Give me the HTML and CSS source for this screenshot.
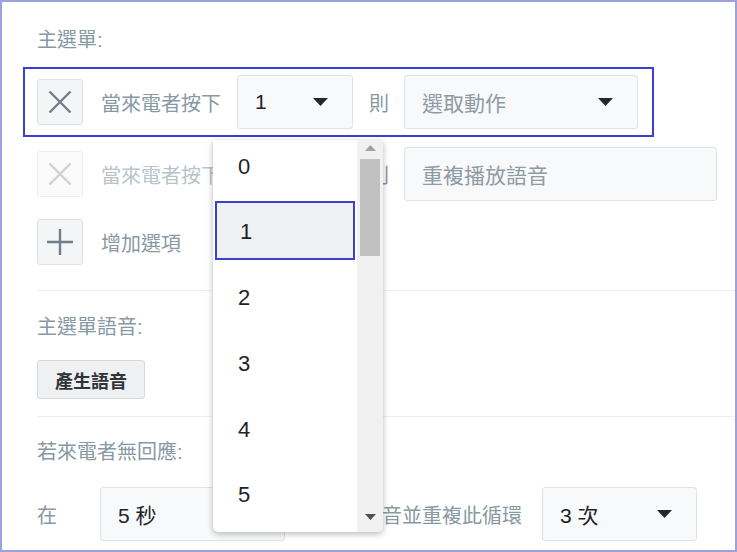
FILE: index.html
```html
<!DOCTYPE html>
<html lang="zh-Hant">
<head>
<meta charset="utf-8">
<link rel="stylesheet" href="styles.css">
</head>
<body>
<div class="frame">
  <section class="section first">
    <div class="label">主選單:</div>
    <div class="focus-wrap">
      <div class="row">
        <div class="icon-btn">
          <svg width="24" height="24" viewBox="0 0 24 24"><path d="M1.5 1.5 L22.5 22.5 M22.5 1.5 L1.5 22.5" stroke="#6f7e88" stroke-width="2.4" fill="none"/></svg>
        </div>
        <div class="cond">當來電者按下</div>
        <div class="select key"><span class="val">1</span><svg class="caret" width="15" height="8" viewBox="0 0 15 8"><path d="M0 0 H15 L7.5 8 Z" fill="#23272a"/></svg></div>
        <div class="then">則</div>
        <div class="select action"><span class="ph">選取動作</span><svg class="caret" width="15" height="8" viewBox="0 0 15 8"><path d="M0 0 H15 L7.5 8 Z" fill="#23272a"/></svg></div>
      </div>
    </div>
    <div class="row row2">
      <div class="icon-btn disabled">
        <svg width="24" height="24" viewBox="0 0 24 24"><path d="M1.5 1.5 L22.5 22.5 M22.5 1.5 L1.5 22.5" stroke="#ccd3d8" stroke-width="2.4" fill="none"/></svg>
      </div>
      <div class="cond dim">當來電者按下</div>
      <div class="select key"><span class="val">0</span></div>
      <div class="then dim">則</div>
      <div class="input"><span class="ph">重複播放語音</span></div>
    </div>
    <div class="row row3">
      <div class="icon-btn">
        <svg width="28" height="28" viewBox="0 0 28 28"><path d="M14 1 V27 M1 14 H27" stroke="#6f7e88" stroke-width="2.4" fill="none"/></svg>
      </div>
      <div class="cond">增加選項</div>
    </div>
  </section>
  <section class="section second">
    <div class="label">主選單語音:</div>
    <div class="btn">產生語音</div>
  </section>
  <section class="section third">
    <div class="label">若來電者無回應:</div>
    <div class="row">
      <div class="at">在</div>
      <div class="select secs"><span class="val">5 秒</span><svg class="caret" width="15" height="8" viewBox="0 0 15 8"><path d="M0 0 H15 L7.5 8 Z" fill="#23272a"/></svg></div>
      <div class="tail">後播放語音並重複此循環</div>
      <div class="select times"><span class="val">3 次</span><svg class="caret" width="15" height="8" viewBox="0 0 15 8"><path d="M0 0 H15 L7.5 8 Z" fill="#23272a"/></svg></div>
    </div>
  </section>
</div>

<div class="dropdown">
  <div class="list">
    <div class="opt">0</div>
    <div class="opt selected">1</div>
    <div class="opt">2</div>
    <div class="opt">3</div>
    <div class="opt">4</div>
    <div class="opt">5</div>
  </div>
  <div class="scrollbar">
    <svg class="arrow" width="11" height="6" viewBox="0 0 11 6"><path d="M0 6 H11 L5.5 0 Z" fill="#a3a3a3"/></svg>
    <div class="thumb"></div>
    <div class="spacer"></div>
    <svg class="arrow" width="11" height="6" viewBox="0 0 11 6"><path d="M0 0 H11 L5.5 6 Z" fill="#505050"/></svg>
  </div>
</div>
</body>
</html>
```
FILE: styles.css
```css
* { box-sizing: border-box; }

html, body {
  margin: 0;
  padding: 0;
  background: #ffffff;
}

body {
  font-family: "Liberation Sans", "Noto Sans CJK TC", sans-serif;
  width: 737px;
  height: 552px;
  overflow: hidden;
}

.frame {
  width: 737px;
  height: 552px;
  border: 2px solid #9ca2dd;
  padding-left: 35px;
  background: #fff;
  overflow: hidden;
}

.section {
  padding-right: 18px;
}

.first {
  padding-top: 24px;
  padding-bottom: 21px;
}

.second {
  border-top: 1px solid #eceef0;
  padding-top: 22px;
  padding-bottom: 17px;
}

.third {
  border-top: 1px solid #eceef0;
  padding-top: 21px;
}

.label {
  font-size: 20px;
  line-height: 28px;
  color: #8899a4;
  height: 28px;
}

.focus-wrap {
  width: fit-content;
  margin: 13px 0 10px -14px;
  border: 2px solid #3b40cf;
  padding: 6px 14px 6px 12px;
}

.row {
  display: flex;
  align-items: center;
  height: 54px;
}

.row3 {
  margin-top: 14px;
}

.icon-btn {
  width: 46px;
  height: 46px;
  border: 1px solid #dde1e4;
  border-radius: 3px;
  background: #f4f5f6;
  display: flex;
  align-items: center;
  justify-content: center;
  flex: none;
}

.icon-btn.disabled {
  background: #fbfbfc;
  border-color: #eceff1;
}

.cond {
  font-size: 20px;
  color: #8899a4;
  margin-left: 18px;
  width: 136px;
  white-space: nowrap;
}

.dim { color: #b9c3ca; }

.then {
  font-size: 20px;
  color: #8899a4;
  width: 51px;
  padding-left: 16px;
}

.select, .input {
  height: 54px;
  border: 1px solid #dfe3e6;
  border-radius: 3px;
  background: #f8f9fa;
  display: flex;
  align-items: center;
  justify-content: space-between;
  padding: 0 24px 0 17px;
  font-size: 21px;
  color: #1f2326;
  flex: none;
}

.key { width: 116px; }
.action { width: 234px; }
.input { flex: 1; }
.secs { width: 185px; }
.times { width: 155px; }

.ph { color: #8e9ba4; }

.caret { display: block; }

.btn {
  margin-top: 19px;
  width: 108px;
  height: 39px;
  border: 1px solid #d4d9dd;
  border-radius: 3px;
  background: #eef0f2;
  font-size: 18px;
  font-weight: bold;
  color: #2f3438;
  display: flex;
  align-items: center;
  justify-content: center;
}

.third .row {
  margin-top: 21px;
}

.at {
  font-size: 20px;
  color: #8899a4;
  width: 63px;
}

.tail {
  font-size: 20px;
  color: #8899a4;
  padding: 0 20px 0 17px;
  white-space: nowrap;
}

.dropdown {
  position: absolute;
  left: 213px;
  top: 140px;
  width: 170px;
  height: 392px;
  background: #fff;
  border-radius: 0 0 5px 5px;
  box-shadow: 0 2px 6px rgba(0, 0, 0, 0.28);
  display: flex;
  overflow: hidden;
}

.list {
  width: 144px;
  margin-top: -5.6px;
}

.opt {
  height: 65.6px;
  display: flex;
  align-items: center;
  padding-left: 25px;
  font-size: 22px;
  color: #1f2326;
}

.opt.selected {
  height: 59px;
  margin: 1px 2px 5.6px 2px;
  padding-left: 23px;
  border: 2px solid #3b40cf;
  background: #eef0f2;
  padding-top: 3px;
}

.scrollbar {
  width: 26px;
  background: #f1f1f1;
  display: flex;
  flex-direction: column;
  align-items: center;
  padding: 5px 0 12px;
}

.arrow { display: block; flex: none; }

.thumb {
  width: 20px;
  height: 97px;
  background: #c1c1c1;
  margin-top: 8px;
}

.spacer { flex: 1; }
```
